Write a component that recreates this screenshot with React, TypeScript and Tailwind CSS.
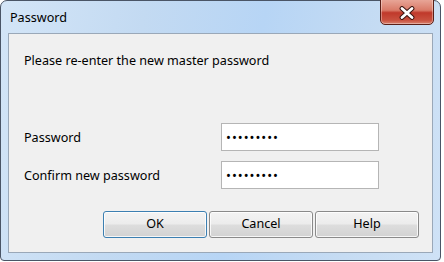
const font = { fontFamily: '"Noto Sans", "Open Sans", sans-serif' };

const CloseButton = () => (
  <div className="mt-[-3px] mr-[6px] flex h-[27px] w-[54px] items-center justify-center rounded-b-[5px] border border-[#5a1f17] bg-[linear-gradient(to_bottom,#e9a99b_0%,#d97a68_45%,#c0392b_55%,#c9513f_85%,#d9826f_100%)] shadow-[inset_0_0_0_1px_rgba(255,255,255,0.35)]">
    <svg width="18" height="14" viewBox="0 0 18 14" className="mt-[3px]">
      <path
        d="M4 2.5 L14 11.5 M14 2.5 L4 11.5"
        stroke="#3a1410"
        strokeWidth="4.8"
        strokeLinecap="round"
      />
      <path
        d="M4 2.5 L14 11.5 M14 2.5 L4 11.5"
        stroke="#ffffff"
        strokeWidth="2.8"
        strokeLinecap="round"
      />
    </svg>
  </div>
);

const PasswordField = () => (
  <div className="flex h-[28px] w-[158px] items-center border border-[#b5b5b5] bg-white pl-[4px] text-[13px] leading-none tracking-[1px] text-black">
    •••••••••
  </div>
);

const DialogButton = ({ label, primary }: { label: string; primary?: boolean }) => (
  <button
    className={
      "h-[27px] w-[104px] rounded-[3px] border text-[12.6px] text-black shadow-[inset_0_0_0_1px_rgba(255,255,255,0.8)] bg-[linear-gradient(to_bottom,#f3f3f3_0%,#ececec_48%,#dddddd_52%,#d2d2d2_100%)] " +
      (primary ? "border-[#3c7fb1] shadow-[inset_0_0_0_1px_#9bdcf5]" : "border-[#8a8a8a]")
    }
    style={font}
  >
    {label}
  </button>
);

export default function App() {
  return (
    <div className="h-[262px] w-[444px] overflow-hidden bg-white" style={font}>
      <div className="flex h-[261px] w-[441px] flex-col rounded-t-[7px] rounded-b-[4px] border border-[#4a5566] bg-[linear-gradient(100deg,#d3e5f7_0%,#c3daf2_30%,#b7d5f5_55%,#c6dcf3_80%,#cfe2f6_100%)]">
        <div className="flex h-[32px] items-start justify-between">
          <span className="ml-[9px] mt-[9px] text-[12.6px] leading-[16px] text-black">Password</span>
          <CloseButton />
        </div>
        <div className="mx-[7px] flex h-[220px] flex-col border border-[#9aa8b8] bg-[#f0f0f0]">
          <p className="ml-[15px] mt-[19px] text-[12.6px] leading-[16px] text-black">
            Please re-enter the new master password
          </p>
          <div className="mt-[54px] flex flex-col gap-[10px]">
            <div className="flex items-center">
              <span className="mt-[2px] w-[212px] pl-[15px] text-[12.6px] leading-[16px] text-black">Password</span>
              <PasswordField />
            </div>
            <div className="flex items-center">
              <span className="mt-[2px] w-[212px] pl-[15px] text-[12.6px] leading-[16px] text-black">Confirm new password</span>
              <PasswordField />
            </div>
          </div>
          <div className="ml-[94px] mt-[22px] flex gap-[2px]">
            <DialogButton label="OK" primary />
            <DialogButton label="Cancel" />
            <DialogButton label="Help" />
          </div>
        </div>
      </div>
    </div>
  );
}
